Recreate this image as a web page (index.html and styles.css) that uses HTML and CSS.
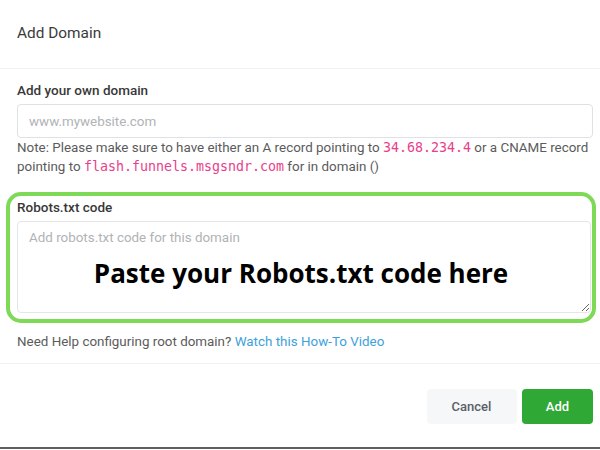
FILE: index.html
```html
<!DOCTYPE html>
<html lang="en">
<head>
<meta charset="utf-8">
<title>Add Domain</title>
<link rel="stylesheet" href="styles.css">
</head>
<body>
<div class="modal">
  <div class="modal-header">
    <h2 class="modal-title">Add Domain</h2>
  </div>
  <div class="modal-body">
    <label class="field-label" for="domain">Add your own domain</label>
    <input class="text-input" id="domain" type="text" placeholder="www.mywebsite.com">
    <p class="note">Note: Please make sure to have either an A record pointing to <code class="code">34.68.234.4</code> or a CNAME record pointing to <code class="code">flash.funnels.msgsndr.com</code> for in domain ()</p>
    <div class="highlight">
      <label class="field-label robots-label" for="robots">Robots.txt code</label>
      <textarea class="text-area" id="robots" placeholder="Add robots.txt code for this domain"></textarea>
      <div class="callout">Paste your Robots.txt code here</div>
    </div>
    <p class="help">Need Help configuring root domain? <a class="help-link" href="#">Watch this How-To Video</a></p>
  </div>
  <div class="modal-footer">
    <button class="btn btn-cancel" type="button">Cancel</button>
    <button class="btn btn-add" type="button">Add</button>
  </div>
  <div class="bottom-edge"></div>
</div>
</body>
</html>
```
FILE: styles.css
```css
* { box-sizing: border-box; }

html, body {
  margin: 0;
  padding: 0;
  background: #ffffff;
}

body {
  font-family: Roboto, "Liberation Sans", Arial, sans-serif;
  color: #333333;
  width: 600px;
  height: 450px;
  overflow: hidden;
}

.modal {
  display: flex;
  flex-direction: column;
  width: 600px;
  height: 450px;
}

.modal-header {
  height: 69px;
  padding: 23px 17px 0;
  border-bottom: 1px solid #f1f2f3;
}

.modal-title {
  margin: 0;
  font-size: 15.4px;
  line-height: 20px;
  font-weight: 400;
  color: #3a3a3a;
}

.modal-body {
  padding: 12px 7px 12px 17px;
  border-bottom: 1px solid #f1f2f4;
  display: flex;
  flex-direction: column;
}

.field-label {
  display: block;
  font-size: 13.5px;
  line-height: 18px;
  font-weight: 500;
  color: #383838;
}

.text-input {
  margin-top: 5px;
  width: 100%;
  height: 34px;
  border: 1px solid #dfe1e4;
  border-radius: 4px;
  padding: 0 11px;
  font-family: Roboto, "Liberation Sans", Arial, sans-serif;
  font-size: 13.4px;
  color: #333333;
  outline: none;
}

.text-input::placeholder,
.text-area::placeholder {
  color: #b0b3b6;
}

.note {
  margin: 0;
  font-size: 13.4px;
  line-height: 19.4px;
  color: #5b5b5b;
}

.code {
  font-family: "DejaVu Sans Mono", "Liberation Mono", monospace;
  font-size: 13.3px;
  line-height: 1;
  color: #e83e8c;
}

.highlight {
  position: relative;
  margin: 15px -3px 0 -11px;
  border: 4px solid #7ed957;
  border-radius: 15px;
  padding: 2px 1px 6px 7px;
}

.text-area {
  display: block;
  margin-top: 5px;
  width: 100%;
  height: 92px;
  border: 1px solid #e4e6e8;
  border-radius: 4px;
  padding: 6px 11px;
  font-family: Roboto, "Liberation Sans", Arial, sans-serif;
  font-size: 13.4px;
  line-height: 19.5px;
  color: #333333;
  outline: none;
  resize: vertical;
}

.callout {
  position: absolute;
  left: 0;
  right: 0;
  top: 64px;
  text-align: center;
  font-family: "Open Sans", "Noto Sans", sans-serif;
  font-weight: 700;
  font-size: 26px;
  line-height: 26px;
  color: #000000;
  pointer-events: none;
}

.help {
  margin: 9px 0 0;
  font-size: 13.4px;
  line-height: 19.5px;
  color: #5b5b5b;
}

.help-link {
  color: #3ea1db;
  text-decoration: none;
}

.modal-footer {
  height: 83px;
  padding: 24.5px 7px 0 17px;
  display: flex;
  justify-content: flex-end;
  align-items: flex-start;
  gap: 5.5px;
}

.btn {
  height: 35px;
  border: none;
  border-radius: 4px;
  font-family: Roboto, "Liberation Sans", Arial, sans-serif;
  font-size: 13px;
  font-weight: 500;
  cursor: pointer;
}

.btn-cancel {
  width: 90px;
  background: #f5f7f9;
  color: #5a6066;
}

.btn-add {
  width: 71px;
  background: #2fa836;
  color: #ffffff;
}

.bottom-edge {
  height: 2px;
  background: #606060;
}
```
